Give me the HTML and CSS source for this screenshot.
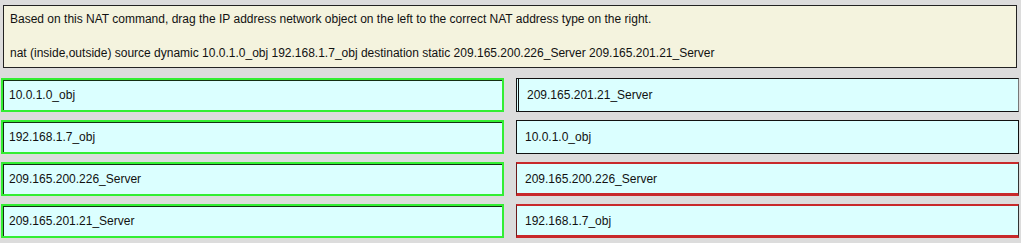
FILE: index.html
```html
<!DOCTYPE html>
<html lang="en">
<head>
    <meta charset="UTF-8">
    <title>NAT Drag and Drop</title>
    <link rel="stylesheet" href="styles.css">
</head>
<body>

    <!-- Question -->
    <div class="question">
        <p>Based on this NAT command, drag the IP address network object on the left to the correct NAT address type on the right.</p>
        <p>nat (inside,outside) source dynamic 10.0.1.0_obj 192.168.1.7_obj destination static 209.165.200.226_Server 209.165.201.21_Server</p>
    </div>

    <!-- Answer area -->
    <div class="board">
        <div class="item left">10.0.1.0_obj</div>
        <div class="item right first">209.165.201.21_Server</div>

        <div class="item left">192.168.1.7_obj</div>
        <div class="item right">10.0.1.0_obj</div>

        <div class="item left">209.165.200.226_Server</div>
        <div class="item right wrong">209.165.200.226_Server</div>

        <div class="item left">209.165.201.21_Server</div>
        <div class="item right wrong">192.168.1.7_obj</div>
    </div>

</body>
</html>
```

FILE: styles.css
```css
body {
    margin: 0;
    background: #dcdcdc;
    font-family: "Liberation Sans", Arial, sans-serif;
    font-size: 12px;
    color: #111;
}

/* Question box */
.question {
    margin: 5px 4px 0 3px;
    background: #f4f3de;
    border: 1px solid #222;
    padding: 5px 6px 7px;
    height: 49px;
}

.question p {
    margin: 0;
    line-height: 16px;
}

.question p + p {
    margin-top: 18px;
}

/* Drag & drop rows */
.board {
    display: grid;
    grid-template-columns: 503px 503px;
    column-gap: 12px;
    row-gap: 8px;
    margin: 10px 0 0 1px;
}

.item {
    height: 34px;
    box-sizing: border-box;
    background: #dbffff;
    display: flex;
    align-items: center;
    padding-left: 6px;
}

.left {
    border: 2px solid #33ee33;
    box-shadow: inset 1px 1px 0 #143014;
}

.right {
    border: 1px solid #111;
    padding-left: 8px;
}

.right.first {
    border-left: 3px double #111;
    border-right-color: #777;
}

.wrong {
    border-top: 2px solid #c8292b;
    border-bottom: 3px solid #c8292b;
    border-left: 1px solid #6a1a1a;
    border-right: 1px solid #333;
}
```
